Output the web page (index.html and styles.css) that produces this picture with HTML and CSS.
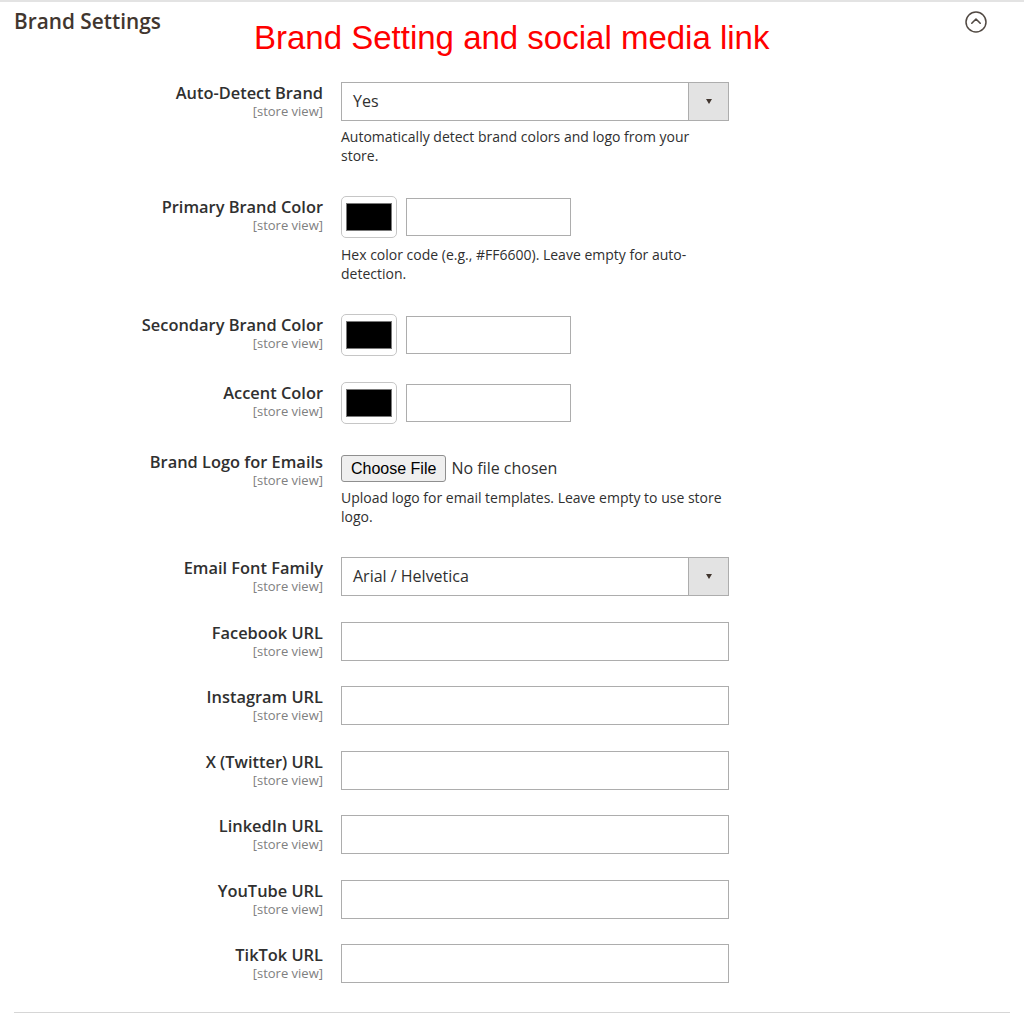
FILE: index.html
```html
<!DOCTYPE html>
<html lang="en">
<head>
<meta charset="utf-8">
<title>Brand Settings</title>
<link rel="stylesheet" href="styles.css">
</head>
<body>
<div class="section">
  <div class="section-head">
    <h2 class="section-title">Brand Settings</h2>
    <svg class="collapse-icon" width="22" height="22" viewBox="0 0 22 22" aria-hidden="true">
      <circle cx="11" cy="11" r="10" fill="none" stroke="#514943" stroke-width="1.5"/>
      <polyline points="6.8,12.2 11,8 15.2,12.2" fill="none" stroke="#514943" stroke-width="1.6" stroke-linecap="round" stroke-linejoin="round"/>
    </svg>
  </div>
  <div class="annotation">Brand Setting and social media link</div>

  <div class="fields">
    <div class="field">
      <div class="label"><span class="name">Auto-Detect Brand</span><span class="scope">[store view]</span></div>
      <div class="control">
        <div class="select"><span class="select-value">Yes</span><span class="select-btn"><span class="arrow"></span></span></div>
        <p class="note">Automatically detect brand colors and logo from your store.</p>
      </div>
    </div>

    <div class="field">
      <div class="label"><span class="name">Primary Brand Color</span><span class="scope">[store view]</span></div>
      <div class="control">
        <div class="color-row"><span class="swatch"><span class="swatch-fill"></span></span><span class="input hex"></span></div>
        <p class="note">Hex color code (e.g., #FF6600). Leave empty for auto-detection.</p>
      </div>
    </div>

    <div class="field">
      <div class="label"><span class="name">Secondary Brand Color</span><span class="scope">[store view]</span></div>
      <div class="control">
        <div class="color-row"><span class="swatch"><span class="swatch-fill"></span></span><span class="input hex"></span></div>
      </div>
    </div>

    <div class="field">
      <div class="label"><span class="name">Accent Color</span><span class="scope">[store view]</span></div>
      <div class="control">
        <div class="color-row"><span class="swatch"><span class="swatch-fill"></span></span><span class="input hex"></span></div>
      </div>
    </div>

    <div class="field field-file">
      <div class="label"><span class="name">Brand Logo for Emails</span><span class="scope">[store view]</span></div>
      <div class="control">
        <div class="file-row"><span class="file-btn">Choose File</span><span class="file-status">No file chosen</span></div>
        <p class="note">Upload logo for email templates. Leave empty to use store logo.</p>
      </div>
    </div>

    <div class="field">
      <div class="label"><span class="name">Email Font Family</span><span class="scope">[store view]</span></div>
      <div class="control">
        <div class="select"><span class="select-value">Arial / Helvetica</span><span class="select-btn"><span class="arrow"></span></span></div>
      </div>
    </div>

    <div class="field field-url">
      <div class="label"><span class="name">Facebook URL</span><span class="scope">[store view]</span></div>
      <div class="control"><span class="input url"></span></div>
    </div>

    <div class="field field-url">
      <div class="label"><span class="name">Instagram URL</span><span class="scope">[store view]</span></div>
      <div class="control"><span class="input url"></span></div>
    </div>

    <div class="field field-url">
      <div class="label"><span class="name">X (Twitter) URL</span><span class="scope">[store view]</span></div>
      <div class="control"><span class="input url"></span></div>
    </div>

    <div class="field field-url">
      <div class="label"><span class="name">LinkedIn URL</span><span class="scope">[store view]</span></div>
      <div class="control"><span class="input url"></span></div>
    </div>

    <div class="field field-url">
      <div class="label"><span class="name">YouTube URL</span><span class="scope">[store view]</span></div>
      <div class="control"><span class="input url"></span></div>
    </div>

    <div class="field field-url">
      <div class="label"><span class="name">TikTok URL</span><span class="scope">[store view]</span></div>
      <div class="control"><span class="input url"></span></div>
    </div>
  </div>
</div>
</body>
</html>
```
FILE: styles.css
```css
html, body {
  margin: 0;
  padding: 0;
  background: #ffffff;
}

body {
  font-family: "Open Sans", "Noto Sans", sans-serif;
  color: #303030;
  width: 1024px;
  height: 1015px;
  overflow: hidden;
}

.section {
  position: relative;
  border-top: 2px solid #e3e3e3;
}

.section-head {
  display: flex;
  justify-content: space-between;
  align-items: flex-start;
  padding: 5px 37px 0 14px;
  height: 28px;
}

.section-title {
  margin: 0;
  font-size: 20.8px;
  line-height: 28px;
  font-weight: 600;
  color: #41362f;
}

.collapse-icon {
  display: block;
  margin-top: 4px;
}

.annotation {
  position: absolute;
  left: 254px;
  top: 19px;
  font-family: "Liberation Sans", Arial, sans-serif;
  font-size: 33px;
  line-height: 33px;
  color: #ff0000;
  white-space: nowrap;
}

.fields {
  margin: 47px 14px 0 14px;
  padding-bottom: 4px;
  border-bottom: 1px solid #d6d6d6;
  display: flex;
  flex-direction: column;
}

.field {
  display: grid;
  grid-template-columns: 309px 388px;
  column-gap: 18px;
  margin-bottom: 26px;
}

.field-file {
  margin-top: 1px;
}

.field-url {
  margin-bottom: 25.4px;
}

.label {
  display: flex;
  flex-direction: column;
  align-items: flex-end;
  text-align: right;
  padding-top: 1px;
}

.name {
  font-size: 16.4px;
  line-height: 19px;
  font-weight: 600;
  color: #303030;
}

.scope {
  font-size: 13px;
  line-height: 15px;
  margin-top: 2px;
  color: #808080;
}

.control {
  display: flex;
  flex-direction: column;
}

.select {
  box-sizing: border-box;
  display: flex;
  height: 39px;
  border: 1px solid #adadad;
  background: #ffffff;
}

.select-value {
  flex: 1;
  padding-left: 11px;
  font-size: 16px;
  line-height: 37px;
  color: #303030;
}

.select-btn {
  width: 39px;
  display: flex;
  align-items: center;
  justify-content: center;
  background: #e3e3e3;
  border-left: 1px solid #adadad;
}

.arrow {
  width: 0;
  height: 0;
  border-left: 3.5px solid transparent;
  border-right: 3.5px solid transparent;
  border-top: 5px solid #41362f;
}

.note {
  margin: 6px 0 0 0;
  max-width: 386px;
  padding-bottom: 5px;
  font-size: 14px;
  line-height: 19px;
  color: #303030;
}

.color-row + .note {
  margin-top: 7px;
}

.input {
  box-sizing: border-box;
  display: block;
  border: 1px solid #adadad;
  background: #ffffff;
}

.url {
  width: 388px;
  height: 39px;
}

.color-row {
  display: flex;
  align-items: center;
  gap: 9px;
  height: 42px;
}

.swatch {
  box-sizing: border-box;
  width: 56px;
  height: 42px;
  border: 1px solid #c6c6c6;
  border-radius: 5px;
  background: #ffffff;
  display: flex;
  align-items: center;
  justify-content: center;
}

.swatch-fill {
  box-sizing: border-box;
  width: 46px;
  height: 28px;
  background: #000000;
  border: 1px solid #7a7a7a;
}

.hex {
  width: 165px;
  height: 38px;
}

.file-row {
  display: flex;
  align-items: center;
  height: 31px;
  padding-top: 4px;
  box-sizing: border-box;
}

.file-btn {
  box-sizing: border-box;
  height: 27px;
  padding: 0 9px;
  font-family: "Liberation Sans", Arial, sans-serif;
  font-size: 16px;
  line-height: 25px;
  color: #000000;
  background: #efefef;
  border: 1px solid #8f8f8f;
  border-radius: 3px;
}

.file-status {
  margin-left: 5px;
  font-size: 16px;
  line-height: 25px;
  color: #303030;
}
```
